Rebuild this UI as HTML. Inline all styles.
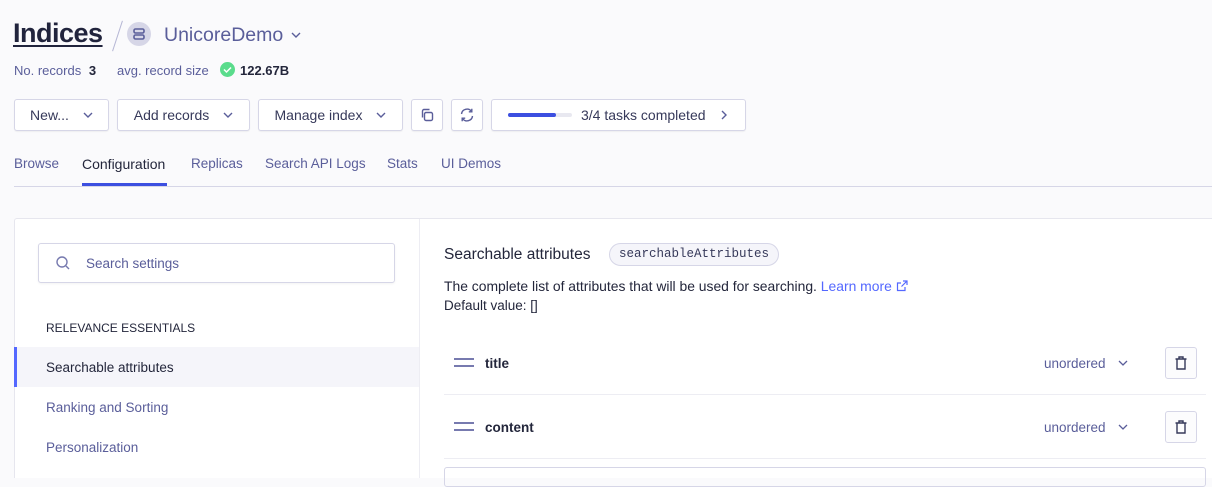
<!DOCTYPE html>
<html><head><meta charset="utf-8"><style>
*{box-sizing:border-box;margin:0;padding:0}
body{width:1212px;height:478px;overflow:hidden;background:#fafafc;font-family:"Liberation Sans",sans-serif;color:#23263b;position:relative}
.a{position:absolute}
.btn{position:absolute;top:99px;height:32px;border:1px solid #d6d6e7;border-radius:3px;background:#fff;font-size:14px;color:#36395a;display:flex;align-items:center;justify-content:center;gap:14px;box-shadow:0 1px 1px rgba(0,0,0,.05)}
.tab{position:absolute;top:156px;font-size:13.5px;color:#5a5e9a}
svg{display:block}
.row{position:absolute;left:444px;width:762px;height:64px;border-bottom:1px solid #ededf3}
</style></head><body>
<div class="a" style="left:13px;top:18px;font-size:27px;font-weight:bold;color:#21243d;text-decoration:underline;text-decoration-thickness:2px;text-underline-offset:3px;letter-spacing:-0.5px">Indices</div>
<div class="a" style="left:117px;top:20px;width:1px;height:32px;background:#b6b7d5;transform:rotate(18deg)"></div>
<div class="a" style="left:127px;top:22px;width:24px;height:24px;border-radius:50%;background:#d6d6e7"></div>
<svg class="a" style="left:132px;top:27px" width="14" height="14" viewBox="0 0 14 14"><rect x="2" y="2" width="10" height="4" rx="1.5" fill="none" stroke="#5a5e9a" stroke-width="1.6"/><rect x="2" y="8" width="10" height="4" rx="1.5" fill="none" stroke="#5a5e9a" stroke-width="1.6"/></svg>
<div class="a" style="left:164px;top:24px;font-size:19.5px;color:#5a5e9a">UnicoreDemo</div>
<svg class="a" style="left:291px;top:31px" width="10" height="8" viewBox="0 0 10 8"><path d="M1 2l4 4 4-4" fill="none" stroke="#5a5e9a" stroke-width="1.4"/></svg>
<div class="a" style="left:14px;top:63px;font-size:13px;color:#5a5e9a">No. records <b style="color:#23263b;margin-left:4px">3</b></div>
<div class="a" style="left:117px;top:63px;font-size:13px;color:#5a5e9a">avg. record size</div>
<div class="a" style="left:220px;top:62px;width:15px;height:15px;border-radius:50%;background:#5adc8c"></div>
<svg class="a" style="left:220px;top:62px" width="15" height="15" viewBox="0 0 15 15"><path d="M4 7.5l2.5 2.5 4.5-4.5" fill="none" stroke="#fff" stroke-width="1.5"/></svg>
<div class="a" style="left:240px;top:63px;font-size:13px;font-weight:bold;color:#23263b">122.67B</div>

<div class="btn" style="left:14px;width:95px">New... <svg width="10" height="8" viewBox="0 0 10 8"><path d="M1 2l4 4 4-4" fill="none" stroke="#5a5e9a" stroke-width="1.4"/></svg></div>
<div class="btn" style="left:117px;width:133px">Add records <svg width="10" height="8" viewBox="0 0 10 8"><path d="M1 2l4 4 4-4" fill="none" stroke="#5a5e9a" stroke-width="1.4"/></svg></div>
<div class="btn" style="left:258px;width:145px">Manage index <svg width="10" height="8" viewBox="0 0 10 8"><path d="M1 2l4 4 4-4" fill="none" stroke="#5a5e9a" stroke-width="1.4"/></svg></div>
<div class="btn" style="left:411px;width:32px"><svg width="16" height="16" viewBox="0 0 16 16"><rect x="5.5" y="5.5" width="8" height="8" rx="1.5" fill="none" stroke="#5a5e9a" stroke-width="1.4"/><path d="M3.5 10.5V4a1.5 1.5 0 0 1 1.5-1.5h5.5" fill="none" stroke="#5a5e9a" stroke-width="1.4"/></svg></div>
<div class="btn" style="left:451px;width:32px"><svg width="16" height="16" viewBox="0 0 16 16"><path d="M2.5 7a5.5 5.5 0 0 1 10-2.5M13.5 9a5.5 5.5 0 0 1-10 2.5" fill="none" stroke="#5a5e9a" stroke-width="1.4"/><path d="M12.8 1.8v3h-3M3.2 14.2v-3h3" fill="none" stroke="#5a5e9a" stroke-width="1.4"/></svg></div>
<div class="btn" style="left:491px;width:255px;justify-content:flex-start;padding-left:16px;gap:0">
<div style="width:64px;height:4px;border-radius:2px;background:#e8e8f0;position:relative;margin-right:9px"><div style="width:48px;height:4px;border-radius:2px;background:#3c4fe0"></div></div>3/4 tasks completed<svg style="margin-left:14px" width="8" height="10" viewBox="0 0 8 10"><path d="M2 1l4 4-4 4" fill="none" stroke="#5a5e9a" stroke-width="1.4"/></svg></div>

<div class="tab" style="left:14px">Browse</div>
<div class="tab" style="left:82px;color:#23263b;font-size:14px">Configuration</div>
<div class="a" style="left:82px;top:183px;width:85px;height:3px;background:#3c4fe0"></div>
<div class="tab" style="left:191px">Replicas</div>
<div class="tab" style="left:265px">Search API Logs</div>
<div class="tab" style="left:387px">Stats</div>
<div class="tab" style="left:441px">UI Demos</div>
<div class="a" style="left:14px;top:186px;width:1198px;height:1px;background:#d6d6e7"></div>

<div class="a" style="left:14px;top:218px;width:1198px;height:260px;background:#fff;border-top:1px solid #e6e6ee;border-left:1px solid #e6e6ee;border-radius:3px 0 0 0"></div>
<div class="a" style="left:419px;top:219px;width:1px;height:259px;background:#ededf3"></div>
<div class="a" style="left:38px;top:243px;width:357px;height:40px;border:1px solid #d6d6e7;border-radius:3px;background:#fff;box-shadow:0 1px 2px rgba(0,0,0,.05)"></div>
<svg class="a" style="left:55px;top:255px" width="16" height="16" viewBox="0 0 16 16"><circle cx="7" cy="7" r="5" fill="none" stroke="#777aaf" stroke-width="1.4"/><path d="M11 11l3 3" stroke="#777aaf" stroke-width="1.4"/></svg>
<div class="a" style="left:86px;top:256px;font-size:13.5px;color:#5a5e9a">Search settings</div>
<div class="a" style="left:46px;top:321px;font-size:12px;color:#23263b">RELEVANCE ESSENTIALS</div>
<div class="a" style="left:14px;top:347px;width:405px;height:40px;background:#f5f5fa;border-left:3px solid #5468ff"></div>
<div class="a" style="left:46px;top:360px;font-size:13.5px;color:#23263b">Searchable attributes</div>
<div class="a" style="left:46px;top:400px;font-size:13.5px;color:#5a5e9a">Ranking and Sorting</div>
<div class="a" style="left:46px;top:440px;font-size:13.5px;color:#5a5e9a">Personalization</div>

<div class="a" style="left:444px;top:246px;font-size:15.5px;color:#23263b">Searchable attributes</div>
<div class="a" style="left:609px;top:243px;height:23px;padding:0 9px;border:1px solid #d6d6e7;border-radius:12px;background:#f5f5fa;font-family:'Liberation Mono',monospace;font-size:12.5px;line-height:21px;color:#36395a">searchableAttributes</div>
<div class="a" style="left:444px;top:278px;font-size:13.9px;color:#23263b;white-space:nowrap;display:flex;align-items:center">The complete list of attributes that will be used for searching.&nbsp;<span style="color:#5468ff">Learn more</span><svg style="margin-left:4px" width="12" height="12" viewBox="0 0 12 12"><path d="M9 7v3.5H1.5V3H5M7 1h4v4M11 1L5.5 6.5" fill="none" stroke="#5468ff" stroke-width="1.2"/></svg></div>
<div class="a" style="left:444px;top:298px;font-size:13.5px;color:#23263b">Default value: []</div>

<div class="row" style="top:331px"></div>
<div class="row" style="top:395px"></div>
<div class="a" style="left:444px;top:467px;width:762px;height:20px;border:1px solid #d6d6e7;border-radius:3px"></div>
<div class="a" style="left:454px;top:358px;width:20px;height:2px;background:#777aaf"></div><div class="a" style="left:454px;top:365px;width:20px;height:2px;background:#777aaf"></div>
<div class="a" style="left:485px;top:356px;font-size:13.5px;font-weight:bold;color:#23263b">title</div>
<div class="a" style="left:454px;top:422px;width:20px;height:2px;background:#777aaf"></div><div class="a" style="left:454px;top:429px;width:20px;height:2px;background:#777aaf"></div>
<div class="a" style="left:485px;top:420px;font-size:13.5px;font-weight:bold;color:#23263b">content</div>

<div class="a" style="left:1044px;top:356px;font-size:13.5px;color:#5a5e9a">unordered</div>
<svg class="a" style="left:1118px;top:359px" width="10" height="8" viewBox="0 0 10 8"><path d="M1 2l4 4 4-4" fill="none" stroke="#5a5e9a" stroke-width="1.3"/></svg>
<div class="a" style="left:1044px;top:420px;font-size:13.5px;color:#5a5e9a">unordered</div>
<svg class="a" style="left:1118px;top:423px" width="10" height="8" viewBox="0 0 10 8"><path d="M1 2l4 4 4-4" fill="none" stroke="#5a5e9a" stroke-width="1.3"/></svg>
<div class="a" style="left:1165px;top:347px;width:32px;height:32px;border:1px solid #d6d6e7;border-radius:3px;background:#fcfcfd"></div>
<svg class="a" style="left:1173px;top:355px" width="16" height="16" viewBox="0 0 16 16"><path d="M2.5 4h11M6 4V2h4v2M4 4v10h8V4" fill="none" stroke="#36395a" stroke-width="1.4"/></svg>
<div class="a" style="left:1165px;top:411px;width:32px;height:32px;border:1px solid #d6d6e7;border-radius:3px;background:#fcfcfd"></div>
<svg class="a" style="left:1173px;top:419px" width="16" height="16" viewBox="0 0 16 16"><path d="M2.5 4h11M6 4V2h4v2M4 4v10h8V4" fill="none" stroke="#36395a" stroke-width="1.4"/></svg>
</body></html>
